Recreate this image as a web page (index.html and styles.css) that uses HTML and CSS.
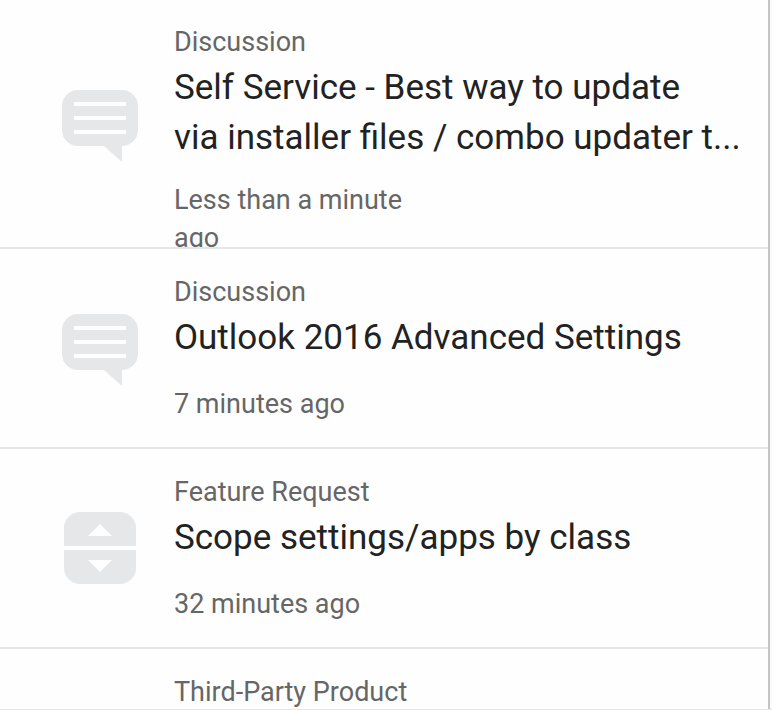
FILE: index.html
```html
<!DOCTYPE html>
<html lang="en">
<head>
<meta charset="utf-8">
<title>Recent activity</title>
<link rel="stylesheet" href="styles.css">
</head>
<body>
<svg class="symbols" aria-hidden="true">
  <symbol id="bubble" viewBox="0 0 76 76">
    <path fill-rule="evenodd" d="M16 4H60A16 16 0 0 1 76 20V44A16 16 0 0 1 60 60V76L42 60H16A16 16 0 0 1 0 44V20A16 16 0 0 1 16 4ZM12 16V20H64V16ZM12 30V34H64V30ZM12 44V48H64V44Z"/>
  </symbol>
  <symbol id="vote" viewBox="0 0 76 76">
    <path fill-rule="evenodd" d="M18 2H58A16 16 0 0 1 74 18V36H2V18A16 16 0 0 1 18 2ZM38 14L26 26H50Z"/>
    <path fill-rule="evenodd" d="M2 40H74V58A16 16 0 0 1 58 74H18A16 16 0 0 1 2 58ZM26 50L38 62L50 50Z"/>
  </symbol>
</svg>
<main class="panel">
  <ul class="feed">
    <li class="item item-tall">
      <svg class="icon" aria-hidden="true"><use href="#bubble"/></svg>
      <div class="body">
        <p class="meta">Discussion</p>
        <h2 class="title">Self Service - Best way to update<br>via installer files / combo updater t...</h2>
        <p class="meta time">Less than a minute ago</p>
      </div>
    </li>
    <li class="item">
      <svg class="icon" aria-hidden="true"><use href="#bubble"/></svg>
      <div class="body">
        <p class="meta">Discussion</p>
        <h2 class="title">Outlook 2016 Advanced Settings</h2>
        <p class="meta time">7 minutes ago</p>
      </div>
    </li>
    <li class="item">
      <svg class="icon" aria-hidden="true"><use href="#vote"/></svg>
      <div class="body">
        <p class="meta">Feature Request</p>
        <h2 class="title">Scope settings/apps by class</h2>
        <p class="meta time">32 minutes ago</p>
      </div>
    </li>
    <li class="item">
      <div class="body">
        <p class="meta">Third-Party Product</p>
      </div>
    </li>
  </ul>
</main>
</body>
</html>
```
FILE: styles.css
```css
* { box-sizing: border-box; }

body {
  margin: 0;
  height: 100vh;
  overflow: hidden;
  background: #fbfbfb;
  border-bottom: 1px solid #e6e6e6;
  font-family: Roboto, "Liberation Sans", sans-serif;
}

.symbols { display: none; }

.panel {
  height: 100%;
  margin-right: 2px;
  overflow: hidden;
  background: #fefefe;
  border-right: 2px solid #c4c4c4;
}

.feed {
  margin: 0;
  padding: 0;
  list-style: none;
}

.item {
  display: grid;
  grid-template-columns: 76px minmax(0, 1fr);
  grid-template-rows: 100%;
  column-gap: 36px;
  height: 200px;
  padding-left: 62px;
  overflow: hidden;
  border-bottom: 2px solid #e6e6e6;
}

.item-tall { height: 249px; }

.icon {
  width: 76px;
  height: 76px;
  align-self: center;
  fill: #e6e7e9;
}

.body {
  grid-column: 2;
  padding-top: 24px;
}

.meta {
  margin: 0;
  color: #666;
  font-size: 27px;
  line-height: 38px;
}

.title {
  margin: 2px 0 0;
  color: #222;
  font-size: 35px;
  font-weight: 400;
  line-height: 50px;
  white-space: nowrap;
}

.time {
  max-width: 250px;
  margin-top: 22px;
}

.item-tall .body { padding-top: 23px; }
.item-tall .time { margin-top: 18px; }
```
